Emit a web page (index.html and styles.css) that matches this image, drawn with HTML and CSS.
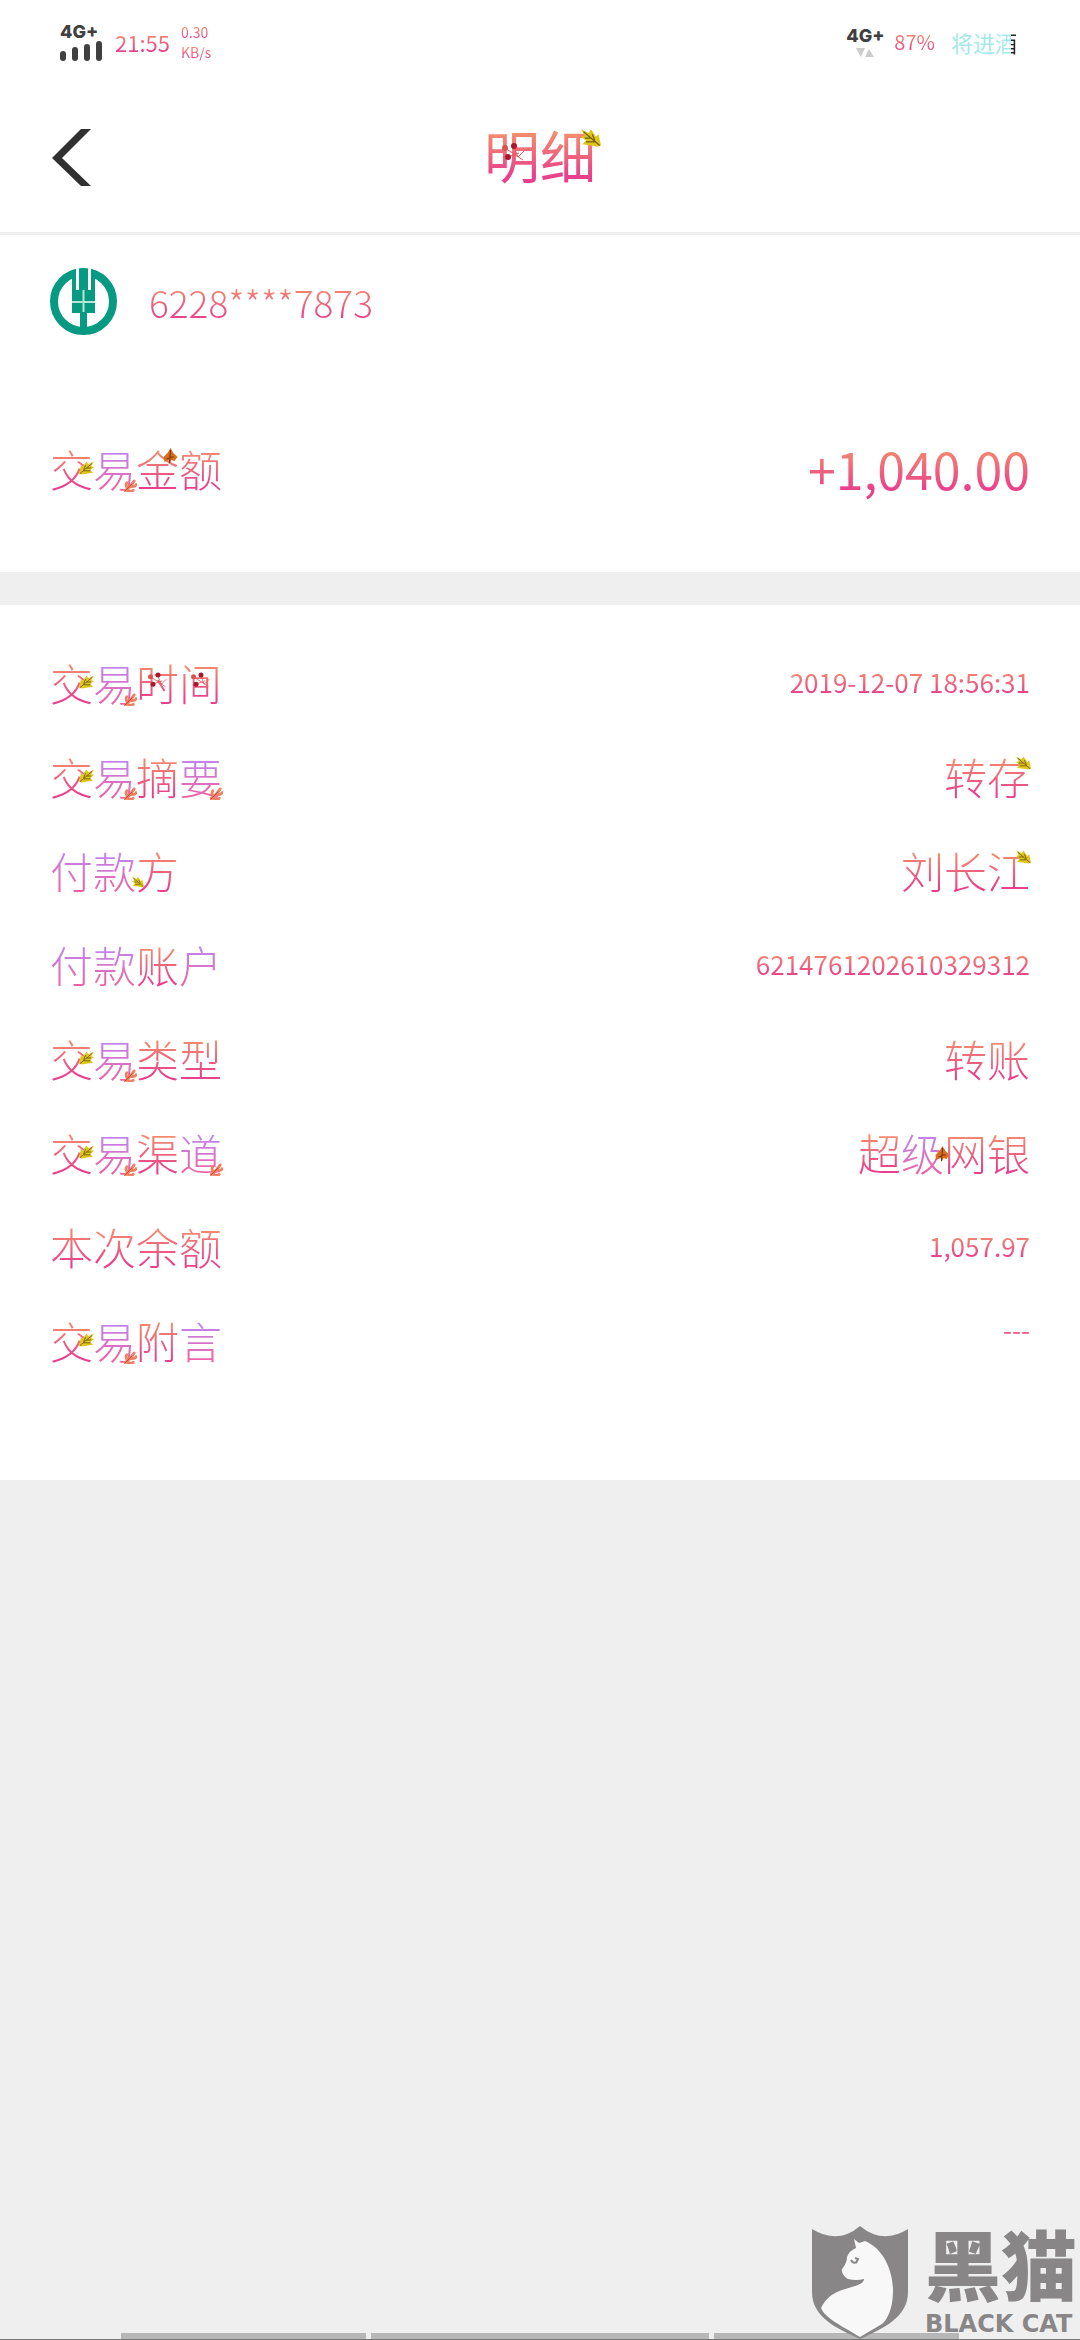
FILE: index.html
```html
<!DOCTYPE html>
<html lang="zh-CN">
<head>
<meta charset="utf-8">
<meta name="viewport" content="width=device-width, initial-scale=1">
<title>明细</title>
<link rel="stylesheet" href="styles.css">
</head>
<body>
<svg class="sprite" aria-hidden="true">
  <symbol id="leaf" viewBox="0 0 16 14">
    <path d="M0 13 2 4 4 6 8 0 10 3 16 0 13 5 16 6 12 9 15 12 8 13 3 14Z" fill="#dfc51c"/>
    <path d="M1 13 14 2M5 9 7 4M5 10 12 10M8 7 13 7" stroke="#76610a" fill="none"/>
  </symbol>
  <symbol id="sprig" viewBox="0 0 14 14">
    <path d="M0 13Q5 11 11 2M4 10Q1 7 3 4M7 8Q12 9 13 6M3 12Q8 14 10 12" stroke="#f08062" stroke-width="3" stroke-linecap="round" fill="none"/>
    <path d="M1 13 9 5" stroke="#c84532" fill="none"/>
  </symbol>
  <symbol id="maple" viewBox="0 0 14 16">
    <path d="M7 0 10 5 14 9 11 13 8 12 6 16 5 12 1 14 0 9 4 5Z" fill="#d5701d"/>
    <path d="M7 2 6 15M6 10 3 11M7 9 10 9" stroke="#7c280d" stroke-width="1" fill="none"/>
  </symbol>
  <symbol id="berries" viewBox="0 0 24 18">
    <path d="M3 5 21 17M11 2 16 14 22 8M6 14 17 10" stroke="#e8575d" stroke-width="1" fill="none"/>
    <circle cx="3" cy="5" r="3" fill="#d9534c"/><circle cx="12" cy="3" r="3" fill="#a9182d"/><circle cx="6" cy="14" r="3" fill="#a9182d"/>
  </symbol>
</svg>
<div class="page">
  <div class="status">
    <div class="status-side">
      <div class="network">
        <span class="net-label">4G+</span>
        <svg class="bars" viewBox="0 0 43 20"><path d="M3 13V17M15 9V17M27 6V17M39 3V17" stroke="#404040" stroke-width="6" stroke-linecap="round"/></svg>
      </div>
      <span class="ink clock">21:55</span>
      <div class="speed"><span class="ink">0.30</span><span class="ink">KB/s</span></div>
    </div>
    <div class="status-side">
      <div class="network network-right">
        <span class="net-label">4G+</span>
        <svg class="traffic" viewBox="0 0 18 9"><path d="M0 0H9L5 9ZM9 9 13 1 18 9Z" fill="#ccc"/></svg>
      </div>
      <span class="ink battery">87%</span>
      <span class="brand">将进<span class="brand-end">酒</span></span>
    </div>
  </div>
  <header class="header">
    <button class="back" aria-label="返回"><svg viewBox="0 0 39 58"><path d="M29 0H39L10 29 39 57H29L0 29Z" fill="#303030"/></svg></button>
    <h1 class="title"><span class="ch ink">明<svg class="mark mark-berries"><use href="#berries"/></svg></span><span class="ch ink">细<svg class="mark mark-title"><use href="#leaf"/></svg></span></h1>
  </header>
  <main>
    <section class="summary">
      <div class="account">
        <svg class="logo" viewBox="0 0 67 67"><circle cx="33.5" cy="33.5" r="29.5" fill="#fff" stroke="#079a82" stroke-width="8"/><path d="M22 6V45H30V60H37V45H45V6Z" fill="#079a82"/><path d="M26 0V22H29V0M38 0V22H41V0" fill="#fff"/><path d="M22 34H45M33.500 22V44" stroke="#b7e5d8" stroke-width="2"/></svg>
        <span class="ink card">6228****7873</span>
      </div>
      <div class="amount-row">
        <span class="label"><span class="ch ink">交<svg class="mark mark-side"><use href="#leaf"/></svg></span><span class="ch ink violet">易<svg class="mark mark-corner"><use href="#sprig"/></svg></span><span class="ch ink">金<svg class="mark mark-top"><use href="#maple"/></svg></span><span class="ch ink">额</span></span>
        <span class="ink amount">+1,040.00</span>
      </div>
    </section>
    <dl class="details">
      <div class="row"><dt class="label"><span class="ch ink">交<svg class="mark mark-side"><use href="#leaf"/></svg></span><span class="ch ink violet">易<svg class="mark mark-corner"><use href="#sprig"/></svg></span><span class="ch ink">时<svg class="mark mark-berry"><use href="#berries"/></svg></span><span class="ch ink">间<svg class="mark mark-berry"><use href="#berries"/></svg></span></dt><dd class="ink number">2019-12-07 18:56:31</dd></div>
      <div class="row"><dt class="label"><span class="ch ink">交<svg class="mark mark-side"><use href="#leaf"/></svg></span><span class="ch ink violet">易<svg class="mark mark-corner"><use href="#sprig"/></svg></span><span class="ch ink">摘</span><span class="ch ink violet">要<svg class="mark mark-corner"><use href="#sprig"/></svg></span></dt><dd class="label"><span class="ch ink">转</span><span class="ch ink">存<svg class="mark mark-tip"><use href="#leaf"/></svg></span></dd></div>
      <div class="row"><dt class="label"><span class="ch ink violet">付</span><span class="ch ink violet">款</span><span class="ch ink">方<svg class="mark mark-start"><use href="#leaf"/></svg></span></dt><dd class="label"><span class="ch ink">刘</span><span class="ch ink">长</span><span class="ch ink">江<svg class="mark mark-tip"><use href="#leaf"/></svg></span></dd></div>
      <div class="row"><dt class="label"><span class="ch ink violet">付</span><span class="ch ink violet">款</span><span class="ch ink">账</span><span class="ch ink violet">户</span></dt><dd class="ink number">6214761202610329312</dd></div>
      <div class="row"><dt class="label"><span class="ch ink">交<svg class="mark mark-side"><use href="#leaf"/></svg></span><span class="ch ink violet">易<svg class="mark mark-corner"><use href="#sprig"/></svg></span><span class="ch ink">类</span><span class="ch ink">型</span></dt><dd class="label"><span class="ch ink">转</span><span class="ch ink">账</span></dd></div>
      <div class="row"><dt class="label"><span class="ch ink">交<svg class="mark mark-side"><use href="#leaf"/></svg></span><span class="ch ink violet">易<svg class="mark mark-corner"><use href="#sprig"/></svg></span><span class="ch ink">渠</span><span class="ch ink violet">道<svg class="mark mark-corner"><use href="#sprig"/></svg></span></dt><dd class="label"><span class="ch ink">超</span><span class="ch ink violet">级<svg class="mark mark-maple"><use href="#maple"/></svg></span><span class="ch ink">网</span><span class="ch ink">银</span></dd></div>
      <div class="row"><dt class="label"><span class="ch ink">本</span><span class="ch ink">次</span><span class="ch ink">余</span><span class="ch ink">额</span></dt><dd class="ink number">1,057.97</dd></div>
      <div class="row"><dt class="label"><span class="ch ink">交<svg class="mark mark-side"><use href="#leaf"/></svg></span><span class="ch ink violet">易<svg class="mark mark-corner"><use href="#sprig"/></svg></span><span class="ch ink">附</span><span class="ch ink violet">言</span></dt><dd class="ink number empty">---</dd></div>
    </dl>
  </main>
  <div class="gesture"><span class="seg"></span><span class="seg seg-wide"></span><span class="seg"></span></div>
  <div class="watermark">
    <svg class="shield" viewBox="0 0 98 114"><path d="M1 3Q27 19 49 0 72 19 97 3V66C97 91 73 102 49 113 25 102 1 91 1 66Z" fill="#888687"/><path d="M43 13 48 17 54 15C73 23 82 45 82 65 82 83 76 94 71 98L49 111C31 100 14 92 10 82 18 66 31 64 44 60 50 58 53 56 53 53Q45 55 37 53C33 51 30 46 31 43Q36 37 36 31 38 25 45 22Z" fill="#f8f8f8"/><path d="M40 34Q42 38 46 36M44 32 47 33 45 37" stroke="#888" stroke-width="2" fill="none"/></svg>
    <div class="wm-text"><span class="wm-cn">黑猫</span><span class="wm-en">BLACK CAT</span></div>
  </div>
</div>
</body>
</html>
```
FILE: styles.css
```css
* { box-sizing: border-box; }
body, h1, dl, dd { margin: 0; }
body {
  background: #efefef;
  font-family: "Noto Sans CJK SC", sans-serif;
}
.sprite { position: absolute; width: 0; height: 0; }
.page {
  position: relative;
  display: flex;
  flex-direction: column;
  min-height: 100vh;
  overflow: hidden;
}

/* Theme lettering */
.ink {
  color: transparent;
  background: linear-gradient(#f58e6c 20%, #e9408b 80%);
  background-clip: text;
  -webkit-background-clip: text;
}
.violet {
  background-image: linear-gradient(#bd86f4 20%, #ee62a4 85%);
}
.ch { position: relative; display: inline-block; }
.mark { position: absolute; width: 15px; height: 14px; }
.mark-side { right: -1px; top: 23px; }
.mark-corner { right: -1px; bottom: 6px; width: 13px; height: 13px; }
.mark-top { right: 1px; top: 10px; height: 16px; }
.mark-berry { left: 12px; top: 20px; width: 20px; height: 16px; }
.mark-tip { right: -1px; top: 10px; transform: scaleX(-1); }
.mark-start { left: -4px; bottom: 12px; width: 12px; height: 12px; transform: scaleX(-1); }
.mark-maple { right: -6px; top: 24px; height: 16px; }
.mark-berries { left: 18px; top: 24px; width: 24px; height: 20px; }
.mark-title { right: -5px; top: 10px; width: 20px; height: 20px; transform: scaleX(-1); }

/* Status bar */
.status {
  display: flex;
  justify-content: space-between;
  height: 84px;
  padding: 0 63px 0 60px;
  background: #fff;
}
.status-side { display: flex; align-items: center; }
.network { display: flex; flex-direction: column; width: 43px; gap: 1px; }
.network-right { width: 48px; gap: 4px; }
.net-label {
  color: #404040;
  font: 800 18px/16px Inter, sans-serif;
}
.bars { width: 43px; height: 20px; }
.traffic { width: 18px; height: 9px; margin-left: 10px; }
.clock { margin-left: 12px; font-size: 22px; line-height: 32px; }
.speed {
  display: flex;
  flex-direction: column;
  margin-left: 11px;
  font-size: 14px;
  line-height: 20px;
}
.battery { font-size: 20px; line-height: 32px; }
.brand {
  margin-left: 16px;
  color: #a4e8ec;
  font-size: 22px;
  line-height: 28px;
}
.brand-end {
  color: transparent;
  background: linear-gradient(to right, #a4e8ec 72%, #222 72%);
  background-clip: text;
  -webkit-background-clip: text;
}

/* Title bar */
.header {
  display: grid;
  grid-template-columns: 1fr auto 1fr;
  align-items: center;
  height: 151px;
  padding: 0 52px;
  border-bottom: 3px solid #eee;
  background: #fff;
}
.back {
  width: 39px;
  height: 58px;
  padding: 0;
  border: 0;
  background: none;
}
.back svg { display: block; width: 39px; height: 58px; }
.title { padding-bottom: 8px; font-size: 56px; font-weight: 400; line-height: 72px; }

/* Account and amount */
.summary {
  padding: 33px 50px 0;
  height: 337px;
  background: #fff;
}
.account { display: flex; align-items: center; gap: 32px; }
.logo { width: 67px; height: 67px; }
.card { font-size: 37px; font-weight: 300; line-height: 56px; }
.amount-row {
  display: flex;
  align-items: center;
  justify-content: space-between;
  margin-top: 97px;
}
.label { font-size: 43px; font-weight: 300; line-height: 60px; white-space: nowrap; }
.amount { font-size: 50px; line-height: 72px; }

/* Transaction details */
.details {
  margin-top: 33px;
  padding: 30px 50px 93px;
  background: #fff;
}
.row {
  display: flex;
  align-items: center;
  justify-content: space-between;
  height: 94px;
}
.number { font-size: 26px; line-height: 40px; }
.empty { align-self: flex-start; margin-top: 16px; }

/* Gesture strip */
.gesture {
  display: flex;
  gap: 5px;
  margin-top: auto;
  height: 7px;
  padding: 0 121px;
  border-bottom: 1px solid #777;
}
.seg { flex: 245; background: #b7b7b7; }
.seg-wide { flex: 339; }

/* Watermark laid over the page corner */
.watermark {
  position: absolute;
  right: 0;
  bottom: 0;
  display: flex;
  gap: 16px;
  color: #888687;
}
.shield { width: 98px; height: 114px; }
.wm-text { display: flex; flex-direction: column; gap: 12px; width: 155px; }
.wm-cn {
  font-family: "Noto Sans CJK SC", sans-serif;
  font-size: 76px;
  font-weight: 900;
  line-height: 72px;
}
.wm-en { font: 700 24px/28px "DejaVu Sans", sans-serif; white-space: nowrap; }
```
